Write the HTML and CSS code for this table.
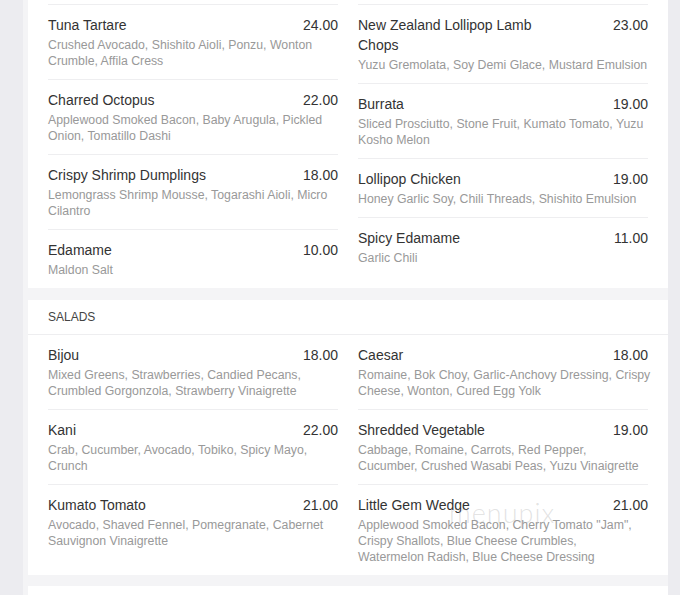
FILE: index.html
```html
<!DOCTYPE html>
<html>
<head>
<meta charset="utf-8">
<link rel="stylesheet" href="styles.css">
</head>
<body>
<div class="wrap">
  <section class="card card-top">
    <div class="grid">
      <div class="col">
        <div class="item"><div class="row"><span class="name">Tuna Tartare</span><span class="price">24.00</span></div><p class="desc">Crushed Avocado, Shishito Aioli, Ponzu, Wonton<br>Crumble, Affila Cress</p></div>
        <div class="item"><div class="row"><span class="name">Charred Octopus</span><span class="price">22.00</span></div><p class="desc">Applewood Smoked Bacon, Baby Arugula, Pickled<br>Onion, Tomatillo Dashi</p></div>
        <div class="item"><div class="row"><span class="name">Crispy Shrimp Dumplings</span><span class="price">18.00</span></div><p class="desc">Lemongrass Shrimp Mousse, Togarashi Aioli, Micro<br>Cilantro</p></div>
        <div class="item"><div class="row"><span class="name">Edamame</span><span class="price">10.00</span></div><p class="desc">Maldon Salt</p></div>
      </div>
      <div class="col">
        <div class="item"><div class="row"><span class="name">New Zealand Lollipop Lamb Chops</span><span class="price">23.00</span></div><p class="desc">Yuzu Gremolata, Soy Demi Glace, Mustard Emulsion</p></div>
        <div class="item"><div class="row"><span class="name">Burrata</span><span class="price">19.00</span></div><p class="desc">Sliced Prosciutto, Stone Fruit, Kumato Tomato, Yuzu<br>Kosho Melon</p></div>
        <div class="item"><div class="row"><span class="name">Lollipop Chicken</span><span class="price">19.00</span></div><p class="desc">Honey Garlic Soy, Chili Threads, Shishito Emulsion</p></div>
        <div class="item"><div class="row"><span class="name">Spicy Edamame</span><span class="price">11.00</span></div><p class="desc">Garlic Chili</p></div>
      </div>
    </div>
  </section>

  <section class="card card-salads">
    <h2 class="head">SALADS</h2>
    <div class="grid">
      <div class="col">
        <div class="item"><div class="row"><span class="name">Bijou</span><span class="price">18.00</span></div><p class="desc">Mixed Greens, Strawberries, Candied Pecans,<br>Crumbled Gorgonzola, Strawberry Vinaigrette</p></div>
        <div class="item"><div class="row"><span class="name">Kani</span><span class="price">22.00</span></div><p class="desc">Crab, Cucumber, Avocado, Tobiko, Spicy Mayo,<br>Crunch</p></div>
        <div class="item"><div class="row"><span class="name">Kumato Tomato</span><span class="price">21.00</span></div><p class="desc">Avocado, Shaved Fennel, Pomegranate, Cabernet<br>Sauvignon Vinaigrette</p></div>
      </div>
      <div class="col">
        <div class="item"><div class="row"><span class="name">Caesar</span><span class="price">18.00</span></div><p class="desc">Romaine, Bok Choy, Garlic-Anchovy Dressing, Crispy<br>Cheese, Wonton, Cured Egg Yolk</p></div>
        <div class="item"><div class="row"><span class="name">Shredded Vegetable</span><span class="price">19.00</span></div><p class="desc">Cabbage, Romaine, Carrots, Red Pepper,<br>Cucumber, Crushed Wasabi Peas, Yuzu Vinaigrette</p></div>
        <div class="item"><div class="row"><span class="name">Little Gem Wedge</span><span class="price">21.00</span></div><p class="desc">Applewood Smoked Bacon, Cherry Tomato "Jam",<br>Crispy Shallots, Blue Cheese Crumbles,<br>Watermelon Radish, Blue Cheese Dressing</p></div>
      </div>
    </div>
    <span class="watermark">menupix</span>
  </section>

  <section class="card card-next"></section>
</div>
</body>
</html>
```

FILE: styles.css
```css
* { box-sizing: border-box; }

html, body {
  margin: 0;
  padding: 0;
  background: #ececf0;
  font-family: "Liberation Sans", Arial, sans-serif;
  overflow: hidden;
}

.wrap {
  margin: 0 12px 0 23px;
  padding-left: 5px;
  background: #f4f4f6;
  display: flex;
  flex-direction: column;
  gap: 12px;
}

.card {
  background: #fff;
  position: relative;
}

.card-top {
  padding: 4px 20px 0;
}

.card-next {
  height: 40px;
  margin-top: -1px;
}

.head {
  margin: 0;
  height: 35px;
  padding: 0 20px;
  border-bottom: 1px solid #eeeef0;
  font-size: 12px;
  font-weight: normal;
  color: #444;
  line-height: 35px;
}

.card-salads .grid {
  padding: 0 20px;
}

.grid {
  display: grid;
  grid-template-columns: minmax(0, 1fr) minmax(0, 1fr);
  column-gap: 20px;
}

.col {
  display: flex;
  flex-direction: column;
  min-width: 0;
}

.item {
  border-top: 1px solid #eeeef0;
  padding: 10px 0 10px;
}

.card-salads .item:first-child {
  border-top: 0;
  padding-top: 10px;
}

.row {
  display: flex;
  justify-content: space-between;
  align-items: flex-start;
  font-size: 14px;
  line-height: 20px;
  color: #333;
}

.name {
  max-width: 70%;
}

.price {
  color: #333;
}

.desc {
  margin: 2px 0 0;
  font-size: 12.3px;
  line-height: 16px;
  color: #999;
  white-space: nowrap;
}

.watermark {
  position: absolute;
  left: 421px;
  top: 196px;
  font-family: "Lato", "Liberation Sans", sans-serif;
  font-weight: 300;
  font-size: 27px;
  letter-spacing: 1px;
  color: rgba(160, 160, 160, 0.3);
  pointer-events: none;
}
```
